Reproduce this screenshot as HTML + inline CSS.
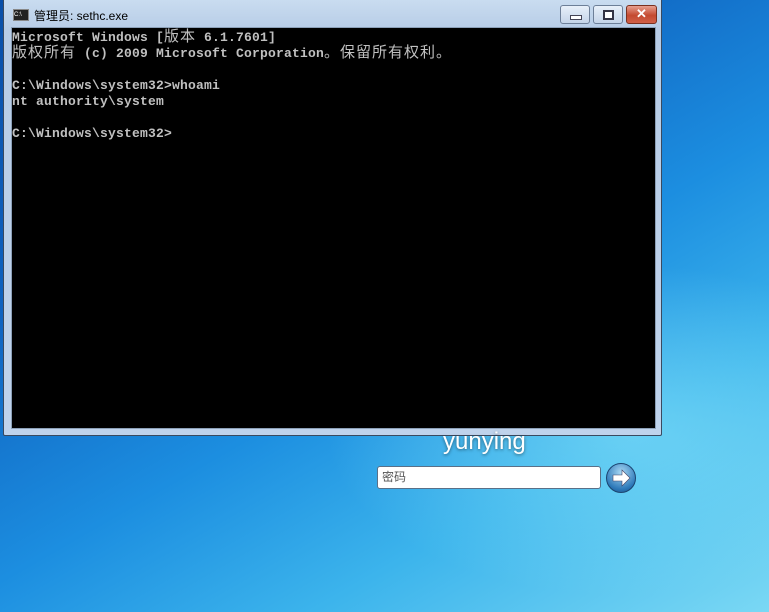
<!DOCTYPE html>
<html style="height:612px;overflow:hidden"><head><meta charset="utf-8"><style>
html,body{margin:0;width:769px;height:612px;overflow:hidden}
body{position:relative;
background:linear-gradient(150deg,#0a4fa8 0%,#0f63c0 30%,#1c8ee0 55%,#3cb4ec 75%,#7ad8f4 100%);font-family:"Liberation Sans","Noto Sans CJK SC",sans-serif}
.glow{position:absolute;left:300px;top:250px;width:469px;height:362px;background:radial-gradient(ellipse at 70% 50%,rgba(140,230,250,.55),rgba(140,230,250,0) 65%)}
.win{position:absolute;left:3px;top:0;width:657px;height:435px;border:1px solid #3a4a60;border-top:none;background:linear-gradient(#c9dcf0,#b7cce6 30px,#bfd3ec);border-radius:0 0 2px 2px}
.title{position:absolute;left:30px;top:7px;font-size:12px;color:#000}
.ico{position:absolute;left:9px;top:9px;width:14px;height:10px;background:#222;border:1px solid #888;color:#fff;font-size:6px;line-height:10px}
.con{position:absolute;left:7px;top:27px;width:643px;height:400px;background:#000;border:1px solid #8ca0b8}
pre{margin:0;position:absolute;left:0px;top:2px;color:#c0c0c0;font-family:"Liberation Mono","Noto Sans CJK SC",monospace;font-weight:bold;font-size:13px;line-height:16px;letter-spacing:.2px}
pre i{font-style:normal;font-weight:normal;display:inline-block;width:16px;font-size:15px;letter-spacing:0;text-align:left}
.b{position:absolute;top:5px;height:17px;border:1px solid #6d7f98;border-radius:3px;background:linear-gradient(#e8f0fa,#c4d4e8)}
.x{background:linear-gradient(#e8a090,#c44a30 55%,#d06048);border-color:#7a3020;color:#fff;font-weight:bold;font-size:13px;text-align:center;line-height:16px}
.user{position:absolute;left:443px;top:428px;color:#fff;font-size:24px;text-shadow:0 1px 3px rgba(0,0,0,.5)}
.pw{position:absolute;left:377px;top:466px;width:224px;height:23px;background:#fff;border:1px solid #5a7088;border-radius:3px;font-size:12px;color:#555;line-height:21px;padding-left:4px;box-sizing:border-box}
.go{position:absolute;left:606px;top:463px;width:28px;height:28px;border-radius:50%;background:radial-gradient(circle at 50% 30%,#a8d8f4,#2c78b8 70%,#1a4c80);border:1px solid #1c4470}
</style></head><body>
<div class="glow"></div>
<div class="win">
<div class="ico">C:\</div>
<div class="title">管理员: sethc.exe</div>
<div class="b" style="left:556px;width:28px"><div style="position:absolute;left:9px;top:9px;width:10px;height:3px;background:#fff;border:1px solid #445"></div></div>
<div class="b" style="left:589px;width:28px"><div style="position:absolute;left:9px;top:4px;width:7px;height:6px;border:2px solid #334;background:#fff"></div></div>
<div class="b x" style="left:622px;width:29px">✕</div>
<div class="con"><pre>Microsoft Windows [<i>版</i><i>本</i> 6.1.7601]
<i>版</i><i>权</i><i>所</i><i>有</i> (c) 2009 Microsoft Corporation<i>。</i><i>保</i><i>留</i><i>所</i><i>有</i><i>权</i><i>利</i><i>。</i>

C:\Windows\system32&gt;whoami
nt authority\system

C:\Windows\system32&gt;</pre></div>
</div>
<div class="user">yunying</div>
<div class="pw">密码</div>
<div class="go"><svg width="28" height="28" viewBox="0 0 28 28"><path d="M6 11h9V6l8 8-8 8v-5H6z" fill="#fff" stroke="#446" stroke-width=".6"/></svg></div>
</body></html>
